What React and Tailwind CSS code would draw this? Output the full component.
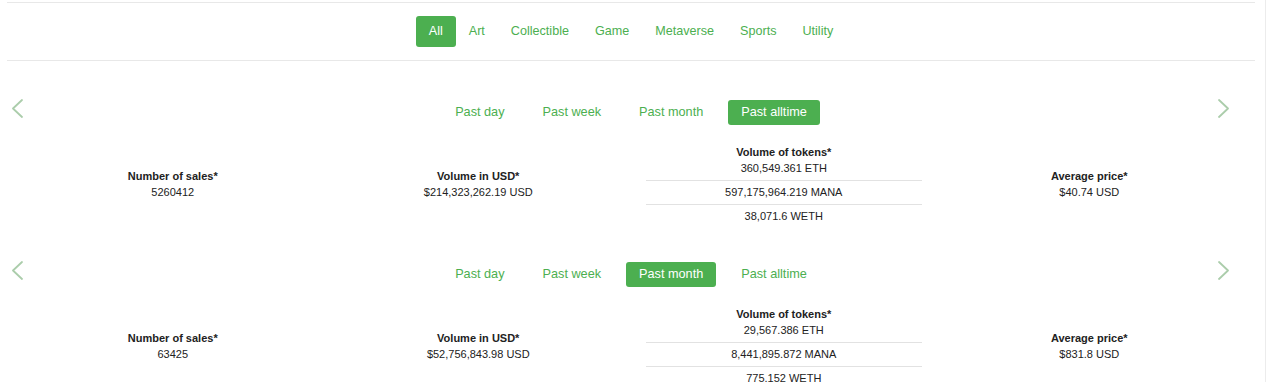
import React, { useState } from "react";

const font = { fontFamily: '"Liberation Sans", Arial, Helvetica, sans-serif' };

const categories = ["All", "Art", "Collectible", "Game", "Metaverse", "Sports", "Utility"];
const periods = ["Past day", "Past week", "Past month", "Past alltime"];

const slides = [
  {
    period: "Past alltime",
    sales: "5260412",
    usd: "$214,323,262.19 USD",
    tokens: ["360,549.361 ETH", "597,175,964.219 MANA", "38,071.6 WETH"],
    avg: "$40.74 USD",
  },
  {
    period: "Past month",
    sales: "63425",
    usd: "$52,756,843.98 USD",
    tokens: ["29,567.386 ETH", "8,441,895.872 MANA", "775.152 WETH"],
    avg: "$831.8 USD",
  },
];

function Chevron({ dir }) {
  return (
    <svg width="12" height="19" viewBox="0 0 12 19" fill="none">
      <polyline
        points={dir === "left" ? "11,1 2,9.5 11,18" : "1,1 10,9.5 1,18"}
        stroke="#abcdab"
        strokeWidth="1.8"
        strokeLinecap="round"
        strokeLinejoin="round"
      />
    </svg>
  );
}

function Stat({ label, value }) {
  return (
    <div className="flex flex-col items-center pb-[5px] text-[11px] text-[#222]">
      <span className="font-bold leading-[16px]">{label}</span>
      <span className="leading-[16px]">{value}</span>
    </div>
  );
}

function Slide({ data }) {
  return (
    <div className="relative pt-[34px]">
      <button className="absolute left-[4px] top-[33px]">
        <Chevron dir="left" />
      </button>
      <button className="absolute right-[25px] top-[33px]">
        <Chevron dir="right" />
      </button>

      {/* period tabs */}
      <div className="flex justify-center gap-[12px]">
        {periods.map((p) => (
          <button
            key={p}
            className={`px-[13px] py-[5px] text-[12.7px] leading-[15px] rounded-[3px] ${
              p === data.period ? "bg-[#4caf50] text-white" : "text-[#4caf50]"
            }`}
          >
            {p}
          </button>
        ))}
      </div>

      {/* stats */}
      <div className="mt-[20px] grid grid-cols-4 items-center px-[13px]">
        <Stat label="Number of sales*" value={data.sales} />
        <Stat label="Volume in USD*" value={data.usd} />
        <div className="flex flex-col px-[15px] text-center text-[11px] text-[#222]">
          <span className="font-bold leading-[14px]">Volume of tokens*</span>
          {data.tokens.map((t, i) => (
            <span
              key={t}
              className={`${i === 0 ? "pt-[3px]" : "pt-[5px]"} pb-[5px] leading-[13px] ${
                i < data.tokens.length - 1 ? "border-b border-[#e2e2e2]" : ""
              }`}
            >
              {t}
            </span>
          ))}
        </div>
        <Stat label="Average price*" value={data.avg} />
      </div>
    </div>
  );
}

export default function App() {
  const [category, setCategory] = useState("All");

  return (
    <div className="flex min-h-screen bg-white" style={font}>
      <div className="w-[1265px] pl-[7px] pr-[10px] pt-[2px]">
        {/* category filter */}
        <div className="flex justify-center border-y border-[#e8e8e8] py-[13px]">
          {categories.map((c) => (
            <button
              key={c}
              onClick={() => setCategory(c)}
              className={`px-[13px] py-[8px] text-[12.6px] leading-[15px] rounded-[3px] ${
                category === c ? "bg-[#4caf50] text-white" : "text-[#4caf50]"
              }`}
            >
              {c}
            </button>
          ))}
        </div>

        <div className="mt-[5px]">
          {slides.map((s) => (
            <Slide key={s.period} data={s} />
          ))}
        </div>
      </div>
      <div className="flex-1 border-l border-[#ececec]" />
    </div>
  );
}
